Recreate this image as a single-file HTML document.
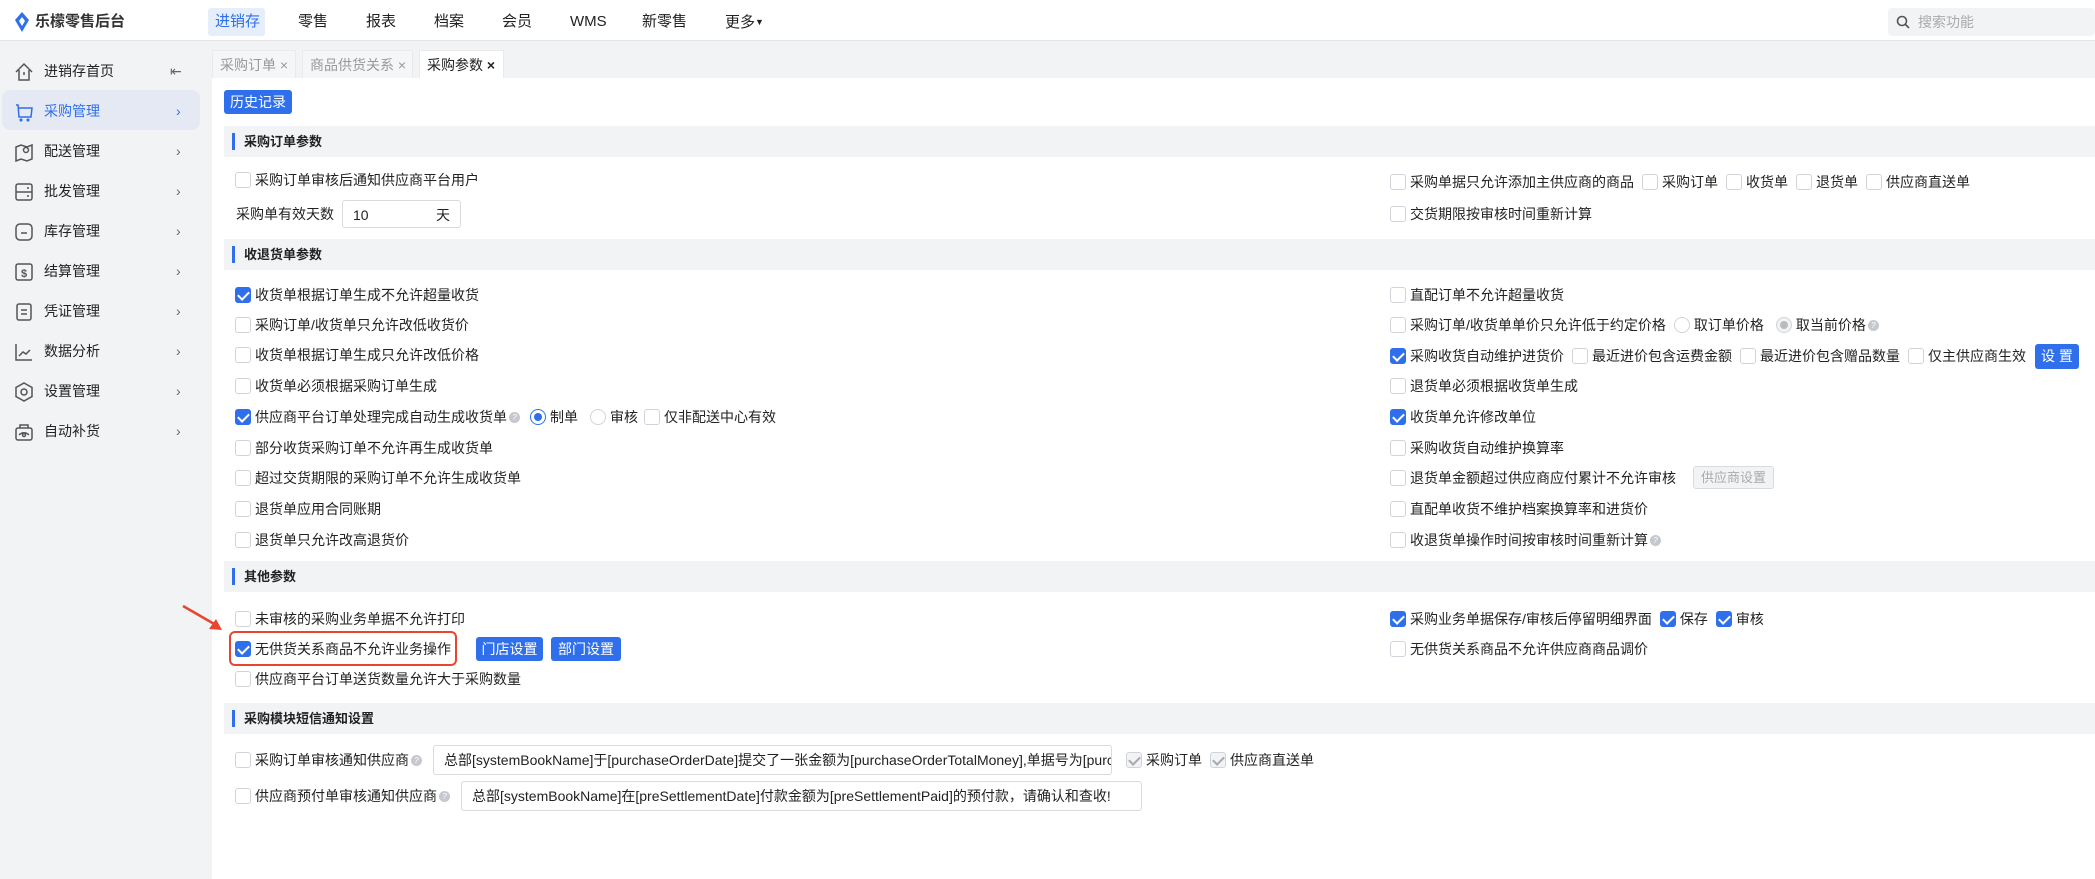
<!DOCTYPE html>
<html><head><meta charset="utf-8">
<style>
*{box-sizing:border-box;margin:0;padding:0}
body{width:2095px;height:879px;position:relative;overflow:hidden;background:#fff;font-family:"Liberation Sans","Noto Sans CJK SC",sans-serif;font-size:14px;color:#222}
.a{position:absolute}
.hdr{left:0;top:0;width:2095px;height:41px;background:#fff;border-bottom:1px solid #e3e4e8}
.nav{top:8px;height:28px;line-height:28px;font-size:15px;color:#222}
.side{left:0;top:41px;width:212px;height:838px;background:#f2f3f5}
.si{left:0;width:200px;height:40px;line-height:40px;font-size:14px;color:#222}
.si svg{position:absolute;left:14px;top:11px}
.si .t{position:absolute;left:44px}
.si .c{position:absolute;left:176px;top:0;color:#666;font-size:14px}
.tabbar{left:212px;top:41px;width:1883px;height:37px;background:#f2f3f5}
.tab{top:50px;height:28px;line-height:28px;background:#f5f6f7;color:#999;font-size:14px;padding-left:7px;border:1px solid #e9eaec;border-bottom:none}
.main{left:212px;top:78px;width:1883px;height:801px;background:#fff}
.sec{left:224px;width:1871px;height:31px;background:#f2f3f5}
.sec b{position:absolute;left:8px;top:7px;width:3px;height:17px;background:#2f6fec}
.sec span{position:absolute;left:20px;top:0;line-height:31px;font-size:13px;font-weight:bold;color:#222}
.r{height:20px;line-height:20px;white-space:nowrap;display:flex;align-items:center;font-size:14px;color:#222}
.cb{display:inline-block;width:16px;height:16px;border:1px solid #d0d3d9;border-radius:3px;background:#fff;margin-right:4px;flex:none;position:relative}
.cb.on{background:#2f6fec;border-color:#2f6fec}
.cb.on:after{content:"";position:absolute;left:4px;top:1px;width:5px;height:9px;border:solid #fff;border-width:0 2px 2px 0;transform:rotate(45deg)}
.cb.dis{background:#f2f3f5;border-color:#d0d3d9}
.cb.dis:after{content:"";position:absolute;left:4px;top:1px;width:5px;height:9px;border:solid #aaa;border-width:0 2px 2px 0;transform:rotate(45deg)}
.rd{display:inline-block;width:16px;height:16px;border:1px solid #d0d3d9;border-radius:50%;margin-right:4px;position:relative;flex:none;background:#fff}
.rd.on{border-color:#2f6fec}
.rd.on:after{content:"";position:absolute;left:3px;top:3px;width:8px;height:8px;border-radius:50%;background:#2f6fec}
.rd.g:after{content:"";position:absolute;left:3px;top:3px;width:8px;height:8px;border-radius:50%;background:#bbb}
.rd.g{background:#f2f3f5}
.q{display:inline-block;width:11px;height:11px;border-radius:50%;background:#c5c8cf;color:#fff;font-size:8px;line-height:11px;text-align:center;margin-left:2px;flex:none}
.btn{height:24px;line-height:24px;background:#2f6fec;color:#fff;border-radius:3px;font-size:14px;text-align:center}
.inp{border:1px solid #d9dbe0;border-radius:3px;background:#fff;font-size:14px;line-height:28px;padding-left:10px;overflow:hidden;white-space:nowrap;color:#222}
</style></head><body>
<div class="a hdr"></div>
<svg class="a" style="left:14px;top:12px" width="16" height="20" viewBox="0 0 16 20"><path d="M8 0 L15 8 L8 20 L1 8 Z" fill="#2f6fec"/><path d="M8 5 L11 9 L8 14 L5 9Z" fill="#fff"/></svg>
<div class="a" style="left:35px;top:11px;font-size:15px;font-weight:bold;color:#333;line-height:22px">乐檬零售后台</div>
<div class="a" style="left:208px;top:8px;width:57px;height:28px;background:#e6eefc;border-radius:3px"></div>
<div class="a nav" style="left:215px;color:#2f6fec">进销存</div>
<div class="a nav" style="left:298px">零售</div>
<div class="a nav" style="left:366px">报表</div>
<div class="a nav" style="left:434px">档案</div>
<div class="a nav" style="left:502px">会员</div>
<div class="a nav" style="left:570px">WMS</div>
<div class="a nav" style="left:642px">新零售</div>
<div class="a nav" style="left:725px">更多<span style="font-size:9px;vertical-align:2px">▼</span></div>
<div class="a" style="left:1888px;top:8px;width:207px;height:28px;background:#f2f3f5;border-radius:4px"></div>
<svg class="a" style="left:1896px;top:15px" width="14" height="14" viewBox="0 0 14 14"><circle cx="6" cy="6" r="4.5" stroke="#555" stroke-width="1.6" fill="none"/><path d="M9.5 9.5L13 13" stroke="#555" stroke-width="1.6"/></svg>
<div class="a" style="left:1918px;top:8px;line-height:28px;color:#aaa;font-size:14px">搜索功能</div>

<div class="a side"></div>
<div class="a" style="left:2px;top:90px;width:198px;height:40px;background:#e4e9f3;border-radius:8px"></div>
<div class="a si" style="top:51px"><svg width="20" height="20" viewBox="0 0 20 20" fill="none" stroke="#555" stroke-width="1.5"><path d="M2 10L10 2L18 10M5 8V18H15V8M10 10V13"/></svg><span class="t">进销存首页</span><span class="c" style="left:170px">⇤</span></div>
<div class="a si" style="top:91px;color:#2f6fec"><svg width="20" height="20" viewBox="0 0 20 20" fill="none" stroke="#2f6fec" stroke-width="1.5"><path d="M2 3H4L5 15H17L18 6H5"/><circle cx="7" cy="18" r=".8"/><circle cx="14" cy="18" r=".8"/></svg><span class="t">采购管理</span><span class="c" style="color:#2f6fec">›</span></div>
<div class="a si" style="top:131px"><svg width="20" height="20" viewBox="0 0 20 20" fill="none" stroke="#555" stroke-width="1.5"><path d="M2 5L7 3L13 5L18 3V17L13 19L7 17L2 19Z"/><circle cx="12" cy="8" r="2.5"/></svg><span class="t">配送管理</span><span class="c">›</span></div>
<div class="a si" style="top:171px"><svg width="20" height="20" viewBox="0 0 20 20" fill="none" stroke="#555" stroke-width="1.5"><rect x="2" y="2" width="16" height="16" rx="2"/><path d="M2 10H18M13 6H15M13 14H15"/></svg><span class="t">批发管理</span><span class="c">›</span></div>
<div class="a si" style="top:211px"><svg width="20" height="20" viewBox="0 0 20 20" fill="none" stroke="#555" stroke-width="1.5"><rect x="2" y="2" width="16" height="16" rx="4"/><path d="M7 11H13"/></svg><span class="t">库存管理</span><span class="c">›</span></div>
<div class="a si" style="top:251px"><svg width="20" height="20" viewBox="0 0 20 20" fill="none" stroke="#555" stroke-width="1.5"><rect x="2" y="2" width="16" height="16" rx="2"/><text x="10" y="15" font-size="11" text-anchor="middle" fill="#555" stroke="none" font-weight="bold">$</text></svg><span class="t">结算管理</span><span class="c">›</span></div>
<div class="a si" style="top:291px"><svg width="20" height="20" viewBox="0 0 20 20" fill="none" stroke="#555" stroke-width="1.5"><rect x="3" y="2" width="14" height="16" rx="2"/><path d="M7 8H13M7 12H13"/></svg><span class="t">凭证管理</span><span class="c">›</span></div>
<div class="a si" style="top:331px"><svg width="20" height="20" viewBox="0 0 20 20" fill="none" stroke="#555" stroke-width="1.5"><path d="M2 2V18H18M5 14L9 10L12 12L16 8"/></svg><span class="t">数据分析</span><span class="c">›</span></div>
<div class="a si" style="top:371px"><svg width="20" height="20" viewBox="0 0 20 20" fill="none" stroke="#555" stroke-width="1.5"><path d="M10 1L18 5.5V14.5L10 19L2 14.5V5.5Z"/><circle cx="10" cy="10" r="3"/></svg><span class="t">设置管理</span><span class="c">›</span></div>
<div class="a si" style="top:411px"><svg width="20" height="20" viewBox="0 0 20 20" fill="none" stroke="#555" stroke-width="1.5"><rect x="2" y="6" width="16" height="12" rx="2"/><path d="M6 6V3H14V6M5 13C8 10 12 10 15 13"/><circle cx="10" cy="13" r="1.5"/></svg><span class="t">自动补货</span><span class="c">›</span></div>

<div class="a tabbar"></div>
<div class="a tab" style="left:212px;width:84px">采购订单 ×</div>
<div class="a tab" style="left:302px;width:111px">商品供货关系 ×</div>
<div class="a tab" style="left:419px;width:85px;background:#fff;color:#222">采购参数 <b>×</b></div>
<div class="a main"></div>

<div class="a btn" style="left:224px;top:90px;width:68px">历史记录</div>

<div class="a sec" style="top:126px"><b></b><span>采购订单参数</span></div>
<div class="a r" style="left:235px;top:170px"><i class="cb"></i>采购订单审核后通知供应商平台用户</div>
<div class="a r" style="left:236px;top:204px">采购单有效天数</div>
<div class="a inp" style="left:342px;top:200px;width:119px;height:28px">10<span style="position:absolute;right:10px">天</span></div>
<div class="a r" style="left:1390px;top:172px"><i class="cb"></i>采购单据只允许添加主供应商的商品<i class="cb" style="margin-left:8px"></i>采购订单<i class="cb" style="margin-left:8px"></i>收货单<i class="cb" style="margin-left:8px"></i>退货单<i class="cb" style="margin-left:8px"></i>供应商直送单</div>
<div class="a r" style="left:1390px;top:204px"><i class="cb"></i>交货期限按审核时间重新计算</div>

<div class="a sec" style="top:239px"><b></b><span>收退货单参数</span></div>
<div class="a r" style="left:235px;top:285px"><i class="cb on"></i>收货单根据订单生成不允许超量收货</div>
<div class="a r" style="left:235px;top:315px"><i class="cb"></i>采购订单/收货单只允许改低收货价</div>
<div class="a r" style="left:235px;top:345px"><i class="cb"></i>收货单根据订单生成只允许改低价格</div>
<div class="a r" style="left:235px;top:376px"><i class="cb"></i>收货单必须根据采购订单生成</div>
<div class="a r" style="left:235px;top:407px"><i class="cb on"></i>供应商平台订单处理完成自动生成收货单<i class="q">?</i><i class="rd on" style="margin-left:10px"></i>制单<i class="rd" style="margin-left:12px"></i>审核<i class="cb" style="margin-left:6px"></i>仅非配送中心有效</div>
<div class="a r" style="left:235px;top:438px"><i class="cb"></i>部分收货采购订单不允许再生成收货单</div>
<div class="a r" style="left:235px;top:468px"><i class="cb"></i>超过交货期限的采购订单不允许生成收货单</div>
<div class="a r" style="left:235px;top:499px"><i class="cb"></i>退货单应用合同账期</div>
<div class="a r" style="left:235px;top:530px"><i class="cb"></i>退货单只允许改高退货价</div>

<div class="a r" style="left:1390px;top:285px"><i class="cb"></i>直配订单不允许超量收货</div>
<div class="a r" style="left:1390px;top:315px"><i class="cb"></i>采购订单/收货单单价只允许低于约定价格<i class="rd" style="margin-left:8px"></i>取订单价格<i class="rd g" style="margin-left:12px"></i>取当前价格<i class="q">?</i></div>
<div class="a r" style="left:1390px;top:346px"><i class="cb on"></i>采购收货自动维护进货价<i class="cb" style="margin-left:8px"></i>最近进价包含运费金额<i class="cb" style="margin-left:8px"></i>最近进价包含赠品数量<i class="cb" style="margin-left:8px"></i>仅主供应商生效</div>
<div class="a btn" style="left:2035px;top:344px;width:44px;height:25px">设 置</div>
<div class="a r" style="left:1390px;top:376px"><i class="cb"></i>退货单必须根据收货单生成</div>
<div class="a r" style="left:1390px;top:407px"><i class="cb on"></i>收货单允许修改单位</div>
<div class="a r" style="left:1390px;top:438px"><i class="cb"></i>采购收货自动维护换算率</div>
<div class="a r" style="left:1390px;top:468px"><i class="cb"></i>退货单金额超过供应商应付累计不允许审核</div>
<div class="a" style="left:1693px;top:466px;width:81px;height:23px;border:1px solid #d9dbe0;background:#f2f3f5;color:#aaa;border-radius:3px;font-size:13px;line-height:21px;text-align:center">供应商设置</div>
<div class="a r" style="left:1390px;top:499px"><i class="cb"></i>直配单收货不维护档案换算率和进货价</div>
<div class="a r" style="left:1390px;top:530px"><i class="cb"></i>收退货单操作时间按审核时间重新计算<i class="q">?</i></div>

<div class="a sec" style="top:561px"><b></b><span>其他参数</span></div>
<div class="a r" style="left:235px;top:609px"><i class="cb"></i>未审核的采购业务单据不允许打印</div>
<div class="a" style="left:229px;top:631px;width:228px;height:35px;border:2px solid #e8452e;border-radius:6px"></div>
<div class="a r" style="left:235px;top:639px"><i class="cb on"></i>无供货关系商品不允许业务操作</div>
<div class="a btn" style="left:476px;top:637px;width:67px">门店设置</div>
<div class="a btn" style="left:551px;top:637px;width:70px">部门设置</div>
<div class="a r" style="left:235px;top:669px"><i class="cb"></i>供应商平台订单送货数量允许大于采购数量</div>
<svg class="a" style="left:180px;top:603px" width="50" height="32" viewBox="0 0 50 32"><path d="M3 3L36 22" stroke="#e8452e" stroke-width="2.5"/><path d="M42 27L29 26L36 16Z" fill="#e8452e"/></svg>
<div class="a r" style="left:1390px;top:609px"><i class="cb on"></i>采购业务单据保存/审核后停留明细界面<i class="cb on" style="margin-left:8px"></i>保存<i class="cb on" style="margin-left:8px"></i>审核</div>
<div class="a r" style="left:1390px;top:639px"><i class="cb"></i>无供货关系商品不允许供应商商品调价</div>

<div class="a sec" style="top:703px"><b></b><span>采购模块短信通知设置</span></div>
<div class="a r" style="left:235px;top:750px"><i class="cb"></i>采购订单审核通知供应商<i class="q">?</i></div>
<div class="a inp" style="left:433px;top:745px;width:679px;height:30px">总部[systemBookName]于[purchaseOrderDate]提交了一张金额为[purchaseOrderTotalMoney],单据号为[purchaseOrderNum]的采购订单</div>
<div class="a r" style="left:1126px;top:750px;color:#222"><i class="cb dis"></i>采购订单<i class="cb dis" style="margin-left:8px"></i>供应商直送单</div>
<div class="a r" style="left:235px;top:786px"><i class="cb"></i>供应商预付单审核通知供应商<i class="q">?</i></div>
<div class="a inp" style="left:461px;top:781px;width:681px;height:30px">总部[systemBookName]在[preSettlementDate]付款金额为[preSettlementPaid]的预付款，请确认和查收!</div>
</body></html>
